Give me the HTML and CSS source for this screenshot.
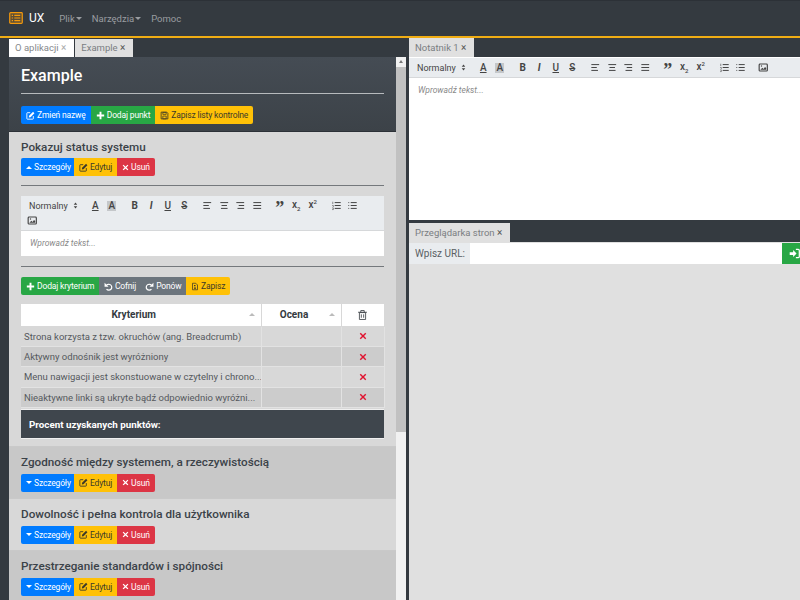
FILE: index.html
```html
<!DOCTYPE html>
<html lang="pl">
<head>
<meta charset="utf-8">
<title>UX</title>
<link rel="stylesheet" href="styles.css">
</head>
<body>
<svg class="defs" width="0" height="0" aria-hidden="true">
  <symbol id="i-edit" viewBox="0 0 16 16"><path d="M13 9v4.500a1 1 0 0 1-1 1H2.500a1 1 0 0 1-1-1V4a1 1 0 0 1 1-1h5" fill="none" stroke="currentColor" stroke-width="1.600"/><path d="M5.500 8.500 12.500 1.500l2.500 2.500-7 7-3 .6z" fill="currentColor"/></symbol>
  <symbol id="i-plus" viewBox="0 0 16 16"><path d="M6.300 1.500h3.400v4.800h4.800v3.400H9.700v4.800H6.300V9.700H1.500V6.300h4.800z" fill="currentColor"/></symbol>
  <symbol id="i-save" viewBox="0 0 16 16"><path d="M2 2h10l2 2v10H2z" fill="none" stroke="currentColor" stroke-width="1.500"/><path d="M5 2.500h6v3.500H5zM5 9h6v5H5z" fill="none" stroke="currentColor" stroke-width="1.300"/></symbol>
  <symbol id="i-file" viewBox="0 0 16 16"><path d="M3 1.500h6.500L13 5v9.500H3z" fill="none" stroke="currentColor" stroke-width="1.500"/><path d="M6 5h3v2.500H6zM6 10h4v2.500H6z" fill="currentColor"/></symbol>
  <symbol id="i-x" viewBox="0 0 16 16"><path d="M3.500 1.500 8 6l4.500-4.500 2 2L10 8l4.500 4.500-2 2L8 10l-4.500 4.500-2-2L6 8 1.500 3.500z" fill="currentColor"/></symbol>
  <symbol id="i-undo" viewBox="0 0 16 16"><path d="M4 6.500A5.300 5.300 0 1 1 4.500 12.800" fill="none" stroke="currentColor" stroke-width="2.200"/><path d="M1 1.500v7h7z" fill="currentColor"/></symbol>
  <symbol id="i-redo" viewBox="0 0 16 16"><path d="M12 6.500A5.300 5.300 0 1 0 11.500 12.800" fill="none" stroke="currentColor" stroke-width="2.200"/><path d="M15 1.500v7h-7z" fill="currentColor"/></symbol>
  <symbol id="i-trash" viewBox="0 0 16 16"><path d="M3.500 4.500h9v10h-9zM1.500 4h13M5.500 4V1.500h5V4M6.300 7v5M9.700 7v5" fill="none" stroke="currentColor" stroke-width="1.200"/></symbol>
  <symbol id="i-signin" viewBox="0 0 16 16"><path d="M1 6h5V3l5 5-5 5v-3H1z" fill="currentColor"/><path d="M10 2h3.500A1.500 1.500 0 0 1 15 3.500v9a1.500 1.500 0 0 1-1.500 1.500H10" fill="none" stroke="currentColor" stroke-width="1.800"/></symbol>
  <symbol id="i-left" viewBox="0 0 18 18"><path d="M3 9h8M3 14h10M3 4h12" stroke="currentColor" stroke-width="1.700" fill="none" stroke-linecap="round"/></symbol>
  <symbol id="i-center" viewBox="0 0 18 18"><path d="M5 9h8M4 14h10M3 4h12" stroke="currentColor" stroke-width="1.700" fill="none" stroke-linecap="round"/></symbol>
  <symbol id="i-right" viewBox="0 0 18 18"><path d="M7 9h8M5 14h10M3 4h12" stroke="currentColor" stroke-width="1.700" fill="none" stroke-linecap="round"/></symbol>
  <symbol id="i-just" viewBox="0 0 18 18"><path d="M3 9h12M3 14h12M3 4h12" stroke="currentColor" stroke-width="1.700" fill="none" stroke-linecap="round"/></symbol>
  <symbol id="i-ol" viewBox="0 0 18 18"><path d="M7 4h9M7 9h9M7 14h9" stroke="currentColor" stroke-width="1.700" fill="none" stroke-linecap="round"/><path d="M3 2.500v4M2 9h2v2.500M2 13h2v3H2" stroke="currentColor" stroke-width="1" fill="none"/></symbol>
  <symbol id="i-ul" viewBox="0 0 18 18"><path d="M7 4h9M7 9h9M7 14h9M3 4h.1M3 9h.1M3 14h.1" stroke="currentColor" stroke-width="1.700" fill="none" stroke-linecap="round"/></symbol>
  <symbol id="i-img" viewBox="0 0 18 18"><rect x="2" y="3" width="14" height="12" rx="1.500" fill="none" stroke="currentColor" stroke-width="2"/><path d="M4 13l3.500-3.500 2 2L12 8l2 2v3z" fill="currentColor"/><circle cx="6" cy="6.500" r="1.200" fill="currentColor"/></symbol>
  <symbol id="i-sort" viewBox="0 0 10 14"><path d="M5 1 8.500 5.500h-7zM5 13 1.500 8.500h7z" fill="currentColor"/></symbol>
</svg>

<header class="navbar">
  <svg class="logo" viewBox="0 0 16 14" width="14" height="12"><rect x=".7" y=".7" width="14.600" height="12.600" rx="1" fill="#fd9f0d33" stroke="#f59a0c" stroke-width="1.400"/><path d="M3 4h1.500M6 4h7M3 7h1.500M6 7h7M3 10h1.500M6 10h7" stroke="#f59a0c" stroke-width="1.400"/></svg>
  <span class="brand">UX</span>
  <nav class="menu">
    <span class="menu-item has-caret">Plik</span>
    <span class="menu-item has-caret">Narzędzia</span>
    <span class="menu-item">Pomoc</span>
  </nav>
</header>

<main class="workspace">
  <section class="left-pane">
    <div class="tabbar">
      <span class="tab tab-active">O aplikacji <i class="close">×</i></span>
      <span class="tab">Example <i class="close">×</i></span>
      <span class="maximize"></span>
    </div>
    <div class="left-body">
      <div class="scroll-content">
        <div class="project-head">
          <h1>Example</h1>
          <hr class="rule-light">
          <div class="btn-group">
            <span class="btn blue"><svg class="ic"><use href="#i-edit"/></svg>Zmień nazwę</span>
            <span class="btn green"><svg class="ic"><use href="#i-plus"/></svg>Dodaj punkt</span>
            <span class="btn yellow"><svg class="ic"><use href="#i-save"/></svg>Zapisz listy kontrolne</span>
          </div>
        </div>

        <article class="item item-open">
          <h2>Pokazuj status systemu</h2>
          <div class="btn-group">
            <span class="btn blue btn-caret"><span class="caret caret-up"></span>Szczegóły</span>
            <span class="btn yellow"><svg class="ic"><use href="#i-edit"/></svg>Edytuj</span>
            <span class="btn red"><svg class="ic ic-x"><use href="#i-x"/></svg>Usuń</span>
          </div>
          <hr class="rule-dark">
          <div class="editor">
            <div class="toolbar">
              <span class="picker">Normalny<svg class="sort"><use href="#i-sort"/></svg></span>
              <span class="tgroup"><span class="tb u-a">A</span><span class="tb a-bg">A</span></span>
              <span class="tgroup"><span class="tb t-b">B</span><span class="tb t-i">I</span><span class="tb t-u">U</span><span class="tb t-s">S</span></span>
              <span class="tgroup"><svg class="tb"><use href="#i-left"/></svg><svg class="tb"><use href="#i-center"/></svg><svg class="tb"><use href="#i-right"/></svg><svg class="tb"><use href="#i-just"/></svg></span>
              <span class="tgroup"><span class="tb t-q">”</span><span class="tb t-x">x<sub>2</sub></span><span class="tb t-x">x<sup>2</sup></span></span>
              <span class="tgroup"><svg class="tb"><use href="#i-ol"/></svg><svg class="tb"><use href="#i-ul"/></svg></span>
              <span class="tgroup"><svg class="tb"><use href="#i-img"/></svg></span>
            </div>
            <div class="editor-area editor-small">Wprowadź tekst...</div>
          </div>
          <hr class="rule-dark">
          <div class="btn-group">
            <span class="btn green"><svg class="ic"><use href="#i-plus"/></svg>Dodaj kryterium</span>
            <span class="btn gray"><svg class="ic"><use href="#i-undo"/></svg>Cofnij</span>
            <span class="btn gray"><svg class="ic"><use href="#i-redo"/></svg>Ponów</span>
            <span class="btn yellow"><svg class="ic ic-file"><use href="#i-file"/></svg>Zapisz</span>
          </div>
          <table class="criteria">
            <colgroup><col class="c-a"><col class="c-b"><col class="c-c"></colgroup>
            <thead>
              <tr>
                <th class="sortable">Kryterium</th>
                <th class="sortable">Ocena</th>
                <th><svg class="trash"><use href="#i-trash"/></svg></th>
              </tr>
            </thead>
            <tbody>
              <tr><td>Strona korzysta z tzw. okruchów (ang. Breadcrumb)</td><td></td><td class="del"><svg class="x"><use href="#i-x"/></svg></td></tr>
              <tr><td>Aktywny odnośnik jest wyróżniony</td><td></td><td class="del"><svg class="x"><use href="#i-x"/></svg></td></tr>
              <tr><td>Menu nawigacji jest skonstuowane w czytelny i chrono...</td><td></td><td class="del"><svg class="x"><use href="#i-x"/></svg></td></tr>
              <tr><td>Nieaktywne linki są ukryte bądź odpowiednio wyróżni...</td><td></td><td class="del"><svg class="x"><use href="#i-x"/></svg></td></tr>
            </tbody>
          </table>
          <div class="score">Procent uzyskanych punktów:</div>
        </article>

        <article class="item item-dark">
          <h2>Zgodność między systemem, a rzeczywistością</h2>
          <div class="btn-group">
            <span class="btn blue btn-caret"><span class="caret"></span>Szczegóły</span>
            <span class="btn yellow"><svg class="ic"><use href="#i-edit"/></svg>Edytuj</span>
            <span class="btn red"><svg class="ic ic-x"><use href="#i-x"/></svg>Usuń</span>
          </div>
        </article>
        <article class="item">
          <h2>Dowolność i pełna kontrola dla użytkownika</h2>
          <div class="btn-group">
            <span class="btn blue btn-caret"><span class="caret"></span>Szczegóły</span>
            <span class="btn yellow"><svg class="ic"><use href="#i-edit"/></svg>Edytuj</span>
            <span class="btn red"><svg class="ic ic-x"><use href="#i-x"/></svg>Usuń</span>
          </div>
        </article>
        <article class="item item-dark">
          <h2>Przestrzeganie standardów i spójności</h2>
          <div class="btn-group">
            <span class="btn blue btn-caret"><span class="caret"></span>Szczegóły</span>
            <span class="btn yellow"><svg class="ic"><use href="#i-edit"/></svg>Edytuj</span>
            <span class="btn red"><svg class="ic ic-x"><use href="#i-x"/></svg>Usuń</span>
          </div>
        </article>
      </div>
      <div class="scrollbar">
        <span class="sb-arrow"></span>
        <span class="sb-thumb"></span>
      </div>
    </div>
  </section>

  <section class="right-pane">
    <div class="tabbar tabbar-right">
      <span class="tab">Notatnik 1 <i class="close">×</i></span>
    </div>
    <div class="editor editor-note">
      <div class="toolbar">
        <span class="picker">Normalny<svg class="sort"><use href="#i-sort"/></svg></span>
        <span class="tgroup"><span class="tb u-a">A</span><span class="tb a-bg">A</span></span>
        <span class="tgroup"><span class="tb t-b">B</span><span class="tb t-i">I</span><span class="tb t-u">U</span><span class="tb t-s">S</span></span>
        <span class="tgroup"><svg class="tb"><use href="#i-left"/></svg><svg class="tb"><use href="#i-center"/></svg><svg class="tb"><use href="#i-right"/></svg><svg class="tb"><use href="#i-just"/></svg></span>
        <span class="tgroup"><span class="tb t-q">”</span><span class="tb t-x">x<sub>2</sub></span><span class="tb t-x">x<sup>2</sup></span></span>
        <span class="tgroup"><svg class="tb"><use href="#i-ol"/></svg><svg class="tb"><use href="#i-ul"/></svg></span>
        <span class="tgroup"><svg class="tb"><use href="#i-img"/></svg></span>
      </div>
      <div class="editor-area">Wprowadź tekst...</div>
    </div>
    <div class="tabbar tabbar-browser">
      <span class="tab">Przeglądarka stron <i class="close">×</i></span>
    </div>
    <div class="browser">
      <div class="url-bar">
        <span class="url-label">Wpisz URL:</span>
        <span class="url-input"></span>
        <span class="url-go"><svg class="ic-go"><use href="#i-signin"/></svg></span>
      </div>
    </div>
  </section>
</main>
</body>
</html>
```
FILE: styles.css
```css
* { box-sizing: border-box; }
html, body { margin: 0; height: 100%; overflow: hidden; }
body {
  width: 800px;
  height: 600px;
  background: #343a40;
  color: #343a40;
  font-family: Roboto, "Noto Sans", sans-serif;
  font-size: 10px;
  display: flex;
  flex-direction: column;
}
.defs { position: absolute; }

.navbar {
  flex: 0 0 38px;
  display: flex;
  align-items: center;
  padding: 0 0 0 9px;
  background: #343a40;
  border-bottom: 2px solid #f0ad14;
  box-shadow: inset 0 1px 0 #2c3137;
}
.logo { margin-right: 6px; }
.brand { color: #fff; font-size: 12px; margin-right: 15px; }
.menu { display: flex; gap: 10px; }
.menu-item { color: #9a9da1; font-size: 9.500px; }
.has-caret::after {
  content: "";
  display: inline-block;
  margin-left: 1px;
  vertical-align: 2px;
  border: 3px solid transparent;
  border-top-color: #9a9da1;
  border-bottom: 0;
}

.workspace { flex: 1; display: flex; min-height: 0; }
.left-pane { width: 406px; flex: none; display: flex; flex-direction: column; padding-left: 9px; min-height: 0; }
.right-pane { width: 391px; margin-left: 3px; flex: none; display: flex; flex-direction: column; }

.tabbar { flex: 0 0 19px; display: flex; align-items: flex-end; gap: 1px; position: relative; }
.tab {
  height: 18px;
  padding: 0 8px 0 6px;
  line-height: 18px;
  font-size: 9.500px;
  color: #7a7e82;
  background: #e0e0e0;
  white-space: nowrap;
}
.tab-active { background: #fff; color: #85888c; }
.close { font-style: normal; font-size: 10px; color: #555; }
.tab-active .close { color: #aaa; }
.maximize { position: absolute; right: -9px; top: 5px; width: 6px; height: 6px; border: 1px solid #a0a4a8; border-top-width: 2px; }

.tabbar-right .tab { height: 19px; line-height: 19px; padding-left: 6px; }
.tabbar-browser { flex: 0 0 22px; background: #343a40; }
.tabbar-browser .tab { height: 19px; line-height: 19px; }

.left-body { flex: 1; display: flex; min-height: 0; overflow: hidden; }
.scroll-content { width: 387px; flex: none; overflow: hidden; }
.scrollbar { flex: 1; display: flex; flex-direction: column; background: #f1f1f1; }
.sb-arrow { height: 10px; position: relative; }
.sb-arrow::before {
  content: "";
  position: absolute;
  left: 3px; top: 3px;
  border: 2px solid transparent;
  border-bottom: 3px solid #777;
  border-top: 0;
}
.sb-thumb { height: 365px; background: #c1c1c1; }

.project-head {
  height: 75px;
  padding: 8px 12px 0;
  background: linear-gradient(#454c54, #3c4248);
  border-bottom: 1px solid #2c3137;
}
h1 { margin: 0; color: #fff; font-size: 16px; line-height: 22px; font-weight: 500; }
hr { margin: 0; border: 0; height: 1px; }
.rule-light { background: #b7babd; margin: 6px 0 12px; }
.rule-dark { background: #74787c; height: 1px; }

.btn-group { display: flex; width: max-content; border-radius: 2px; overflow: hidden; }
.btn {
  height: 18px;
  padding: 0 5px;
  display: flex;
  align-items: center;
  gap: 2px;
  color: #fff;
  font-size: 8.500px;
  letter-spacing: -0.150px;
  white-space: nowrap;
}
.btn-caret { gap: 1px; padding-right: 3px; }
.ic { width: 9px; height: 9px; flex: none; }
.ic-x { width: 7px; height: 7px; }
.ic-file { width: 8px; }
.blue { background: #007bff; }
.green { background: #28a745; }
.yellow { background: #ffc107; color: #3c3a2a; }
.red { background: #dc3545; }
.gray { background: #6c757d; padding: 0 4.500px; }
.caret { width: 0; height: 0; margin: 0 1px 0 0; border: 3.500px solid transparent; border-top-color: #fff; border-bottom: 0; }
.caret-up { border-top: 0; border-bottom: 3.500px solid #fff; }

.item { height: 52px; padding: 5.500px 12px 0; background: #d8d8d8; border-bottom: 1px solid #c9c9c9; }
.item-dark { background: #c8c8c8; }
.item-open { height: 315px; padding-top: 6px; }
h2 { margin: 0 0 3px; font-size: 11.700px; line-height: 18px; font-weight: 500; color: #3b4248; }
.item-open > h2 { margin-bottom: 2px; }
.item-open .rule-dark { margin: 9px 0 10px; }
.item-open .editor + .rule-dark { margin: 10px 0 10px; }

.editor { background: #fff; }
.toolbar {
  display: flex;
  flex-wrap: wrap;
  row-gap: 0;
  padding: 2px 0 2px 3px;
  background: #e9ecef;
  border-bottom: 1px solid #d6d8da;
}
.picker {
  flex: none;
  width: 60px;
  height: 15px;
  padding-left: 5px;
  margin-right: 3px;
  display: flex;
  align-items: center;
  font-size: 9px;
  color: #444;
  position: relative;
}
.sort { width: 5px; height: 7px; position: absolute; right: 6px; top: 4px; color: #444; }
.tgroup { flex: none; display: flex; margin-right: 6.500px; }
.tb {
  width: 16.500px;
  height: 15px;
  padding: 2px 3px;
  display: block;
  text-align: center;
  color: #444;
  font-size: 10px;
  line-height: 11px;
}
.u-a { text-decoration: underline; font-weight: 500; }
.a-bg { font-weight: 500; background: linear-gradient(#c4c7ca, #c4c7ca) center / 9px 10px no-repeat; }
.t-b { font-weight: 700; }
.t-i { font-style: italic; font-weight: 700; }
.t-u { text-decoration: underline; font-weight: 500; }
.t-s { text-decoration: line-through; font-weight: 500; }
.t-q { font-family: "Liberation Serif", serif; font-weight: 700; font-size: 18px; line-height: 16px; }
.t-x { font-weight: 500; padding: 1px 0; }
.t-x sub, .t-x sup { font-size: 6px; line-height: 0; }

.editor-area {
  padding: 7px 9px;
  font-size: 8.500px;
  line-height: 11px;
  font-style: italic;
  color: #8a8a8a;
  background: #fff;
}
.editor-small { height: 25px; padding-left: 9px; }
.editor-note { flex: 0 0 163px; display: flex; flex-direction: column; }
.editor-note .editor-area { flex: 1; }
.editor-note .toolbar { height: 20px; flex-wrap: nowrap; margin-top: 1px; }

.criteria {
  margin-top: 9px;
  width: 363px;
  table-layout: fixed;
  border-collapse: collapse;
  font-size: 9.500px;
}
.c-a { width: 240px; }
.c-b { width: 80px; }
.c-c { width: 43px; }
.criteria th {
  height: 22px;
  padding: 0;
  background: #fff;
  color: #343a40;
  font-size: 10px;
  font-weight: 700;
  text-align: center;
  border: 1px solid #d8d8d8;
  border-width: 0 1px 1px 0;
  position: relative;
}
.criteria th.sortable { padding-right: 14px; }
.sortable::after {
  content: "";
  position: absolute;
  right: 6px;
  top: 9px;
  border: 3px solid transparent;
  border-bottom: 3px solid #bbb;
  border-top: 0;
}
.criteria td {
  height: 20.400px;
  padding: 0 3px;
  white-space: nowrap;
  overflow: hidden;
  color: #55595d;
  border: 1px solid #e2e2e2;
  border-width: 0 1px 1px 0;
}
.criteria tbody tr:nth-child(even) { background: #cccccc; }
.del { text-align: center; }
.x { width: 8px; height: 8px; color: #e0132f; display: block; margin: 0 auto; }
.trash { width: 11px; height: 12px; color: #3a3f44; display: block; margin: 0 auto; }
.score {
  height: 30px;
  margin-top: 1px;
  padding: 0 8px;
  line-height: 29px;
  font-size: 9.800px;
  font-weight: 700;
  color: #fff;
  background: #3f464d;
  border: 1px solid #f0f0f0;
  border-width: 1px 0;
}

.browser { flex: 1; background: #e0e0e0; padding-top: 1px; }
.url-bar { height: 21px; display: flex; background: #fff; }
.url-label { width: 61px; flex: none; background: #e9ecef; color: #5a5f64; font-size: 10px; line-height: 21px; padding-left: 6px; }
.url-input { flex: 1; background: #fff; }
.url-go { width: 18px; flex: none; background: #28a745; color: #fff; display: flex; align-items: center; padding-left: 7px; overflow: hidden; }
.ic-go { width: 11px; height: 11px; flex: none; }
```
